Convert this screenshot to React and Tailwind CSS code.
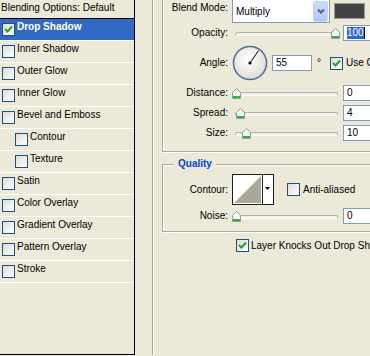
import clsx from 'clsx';

const styles = [
  { name: 'Drop Shadow', checked: true, active: true },
  { name: 'Inner Shadow' },
  { name: 'Outer Glow' },
  { name: 'Inner Glow' },
  { name: 'Bevel and Emboss' },
  { name: 'Contour', indent: true },
  { name: 'Texture', indent: true },
  { name: 'Satin' },
  { name: 'Color Overlay' },
  { name: 'Gradient Overlay' },
  { name: 'Pattern Overlay' },
  { name: 'Stroke' },
];

function Check({ checked }) {
  return (
    <span className="flex h-[13px] w-[13px] shrink-0 items-center justify-center border border-[#1C5180] bg-linear-to-br from-[#DCDCD7] to-white">
      {checked && (
        <svg width="11" height="11" viewBox="0 0 11 11">
          <path d="M2 5 L4.5 7.5 L9 2.5" fill="none" stroke="#21A121" strokeWidth="2" />
        </svg>
      )}
    </span>
  );
}

function Thumb() {
  return (
    <svg width="9" height="11" viewBox="0 0 9 11">
      <path d="M0.5 4.5 L4.5 0.5 L8.5 4.5 L8.5 10.5 L0.5 10.5 Z" fill="#F7F7F4" stroke="#8E9AA6" />
      <path d="M1 8.5 H8 M1 9.5 H8" stroke="#2FB52F" />
    </svg>
  );
}

function Slider({ pos }) {
  return (
    <div className="relative h-[18px] w-[107px] shrink-0">
      <div className="absolute left-[3px] right-[1px] top-[8px] h-[4px] rounded-[2px] border border-[#B4B1A3] border-b-white bg-[#F2F1EA]" />
      <div className="absolute top-[4px] flex" style={{ left: pos }}>
        <Thumb />
      </div>
    </div>
  );
}

function Field({ className, children }) {
  return (
    <div className={clsx('flex h-[16px] shrink-0 items-center border border-[#7F9DB9] bg-white pl-[3px]', className)}>
      {children}
    </div>
  );
}

function Row({ label, className, children }) {
  return (
    <div className={clsx('flex items-center', className)}>
      <div className="w-[65px] shrink-0 text-right">{label}</div>
      <div className="ml-[4px] flex items-center">{children}</div>
    </div>
  );
}

function Dial() {
  return (
    <svg width="36" height="36" viewBox="0 0 36 36">
      <defs>
        <radialGradient id="dial" cx="0.45" cy="0.4" r="0.6">
          <stop offset="0" stopColor="#FFFFFF" />
          <stop offset="1" stopColor="#DEDDD6" />
        </radialGradient>
      </defs>
      <circle cx="18" cy="18" r="16.5" fill="url(#dial)" stroke="#4F6A9C" strokeWidth="1.5" />
      <line x1="18" y1="18" x2="26.5" y2="5.5" stroke="#000" strokeWidth="1" />
      <circle cx="18" cy="18" r="1.6" fill="#000" />
    </svg>
  );
}

function ContourPicker() {
  return (
    <svg width="42" height="31" viewBox="0 0 42 31">
      <rect x="0.5" y="0.5" width="41" height="30" fill="#fff" stroke="#1E1E1E" />
      <path d="M2 29 L29 2 L29 29 Z" fill="#ACA899" />
      <line x1="30.5" y1="1" x2="30.5" y2="30" stroke="#1E1E1E" />
      <path d="M33 13 L38 13 L35.5 16 Z" fill="#000" />
    </svg>
  );
}

export default function App() {
  return (
    <div className="flex h-[356px] w-[370px] overflow-hidden bg-[#ECE9D8] font-['Liberation_Sans',Arial,sans-serif] text-[10px] leading-[12px] text-black">
      {/* Styles list */}
      <div className="h-[355px] w-[135px] shrink-0 border-r border-b border-black">
        <div className="h-[19px] border-b border-black pl-[1px] pt-[2px]">Blending Options: Default</div>
        {styles.map((s) => (
          <div
            key={s.name}
            className={clsx(
              'flex h-[22px] items-start gap-[2px] border-b border-white',
              s.indent ? 'pl-[15px]' : 'pl-[2px]',
              s.active && 'bg-[#316AC5] font-bold text-white'
            )}
          >
            <span className="mt-[4px] flex">
              <Check checked={s.checked} />
            </span>
            <span className="mt-[2px] whitespace-nowrap">{s.name}</span>
          </div>
        ))}
      </div>

      {/* Settings */}
      <div className="min-w-0 flex-1 pl-[17px]">
        <div className="h-full border-l border-[#ACA899] pl-[9px] shadow-[inset_1px_0_0_#fff]">
          {/* Structure */}
          <div className="w-[240px] shrink-0 border-b border-l border-[#ACA899] pb-[9px] shadow-[inset_1px_0_0_#fff,0_1px_0_#fff]">
            <div className="-mt-[1px] flex h-[24px] items-start">
              <div className="w-[65px] shrink-0 pt-[3px] text-right">Blend Mode:</div>
              <div className="ml-[4px] flex h-[24px] w-[98px] shrink-0 items-center border border-[#7F9DB9] bg-white pl-[3px]">
                <span className="mt-[2px] flex-1">Multiply</span>
                <span className="mr-[1px] flex h-[21px] w-[15px] items-center justify-center rounded-[2px] border border-[#C3D3FD] bg-linear-to-b from-[#CEDCFC] to-[#B2C6F6]">
                  <svg width="8" height="6" viewBox="0 0 8 6">
                    <path d="M1 1.5 L4 4.5 L7 1.5" fill="none" stroke="#4D6185" strokeWidth="2" />
                  </svg>
                </span>
              </div>
              <div className="ml-[4px] mt-[4px] h-[16px] w-[31px] shrink-0 border border-[#9A9A9A] bg-[#434343]" />
            </div>

            <Row label="Opacity:" className="mt-[1px] h-[18px]">
              <Slider pos={99} />
              <Field className="ml-[4px] w-[40px]">
                <span className="bg-[#316AC5] text-white">100</span>
                <span className="h-[12px] w-[1px] bg-black" />
              </Field>
            </Row>

            <Row label="Angle:" className="mt-[3px] h-[36px]">
              <Dial />
              <Field className="ml-[4px] w-[40px]">55</Field>
              <span className="ml-[5px] w-[13px]">°</span>
              <Check checked />
              <span className="ml-[3px] whitespace-nowrap">Use Global Light</span>
            </Row>

            <Row label="Distance:" className="mt-[3px] h-[18px]">
              <Slider pos={0} />
              <Field className="ml-[4px] w-[40px]">0</Field>
            </Row>
            <Row label="Spread:" className="mt-[2px] h-[18px]">
              <Slider pos={4} />
              <Field className="ml-[4px] w-[40px]">4</Field>
            </Row>
            <Row label="Size:" className="mt-[2px] h-[18px]">
              <Slider pos={10} />
              <Field className="ml-[4px] w-[40px]">10</Field>
            </Row>
          </div>

          {/* Quality */}
          <div className="relative mt-[12px] w-[240px] shrink-0 border-t border-b border-l border-[#ACA899] pb-[6px] shadow-[inset_1px_1px_0_#fff,0_1px_0_#fff]">
            <span className="absolute -top-[7px] left-[11px] bg-[#ECE9D8] px-[4px] font-bold text-[#0046D5]">Quality</span>
            <Row label="Contour:" className="mt-[9px] h-[31px]">
              <ContourPicker />
              <span className="ml-[13px] flex">
                <Check />
              </span>
              <span className="ml-[3px]">Anti-aliased</span>
            </Row>
            <Row label="Noise:" className="mt-[2px] h-[18px]">
              <Slider pos={0} />
              <Field className="ml-[4px] w-[40px]">0</Field>
            </Row>
          </div>

          <div className="ml-[74px] mt-[7px] flex items-center gap-[2px]">
            <Check checked />
            <span className="whitespace-nowrap">Layer Knocks Out Drop Shadow</span>
          </div>
        </div>
      </div>
    </div>
  );
}
